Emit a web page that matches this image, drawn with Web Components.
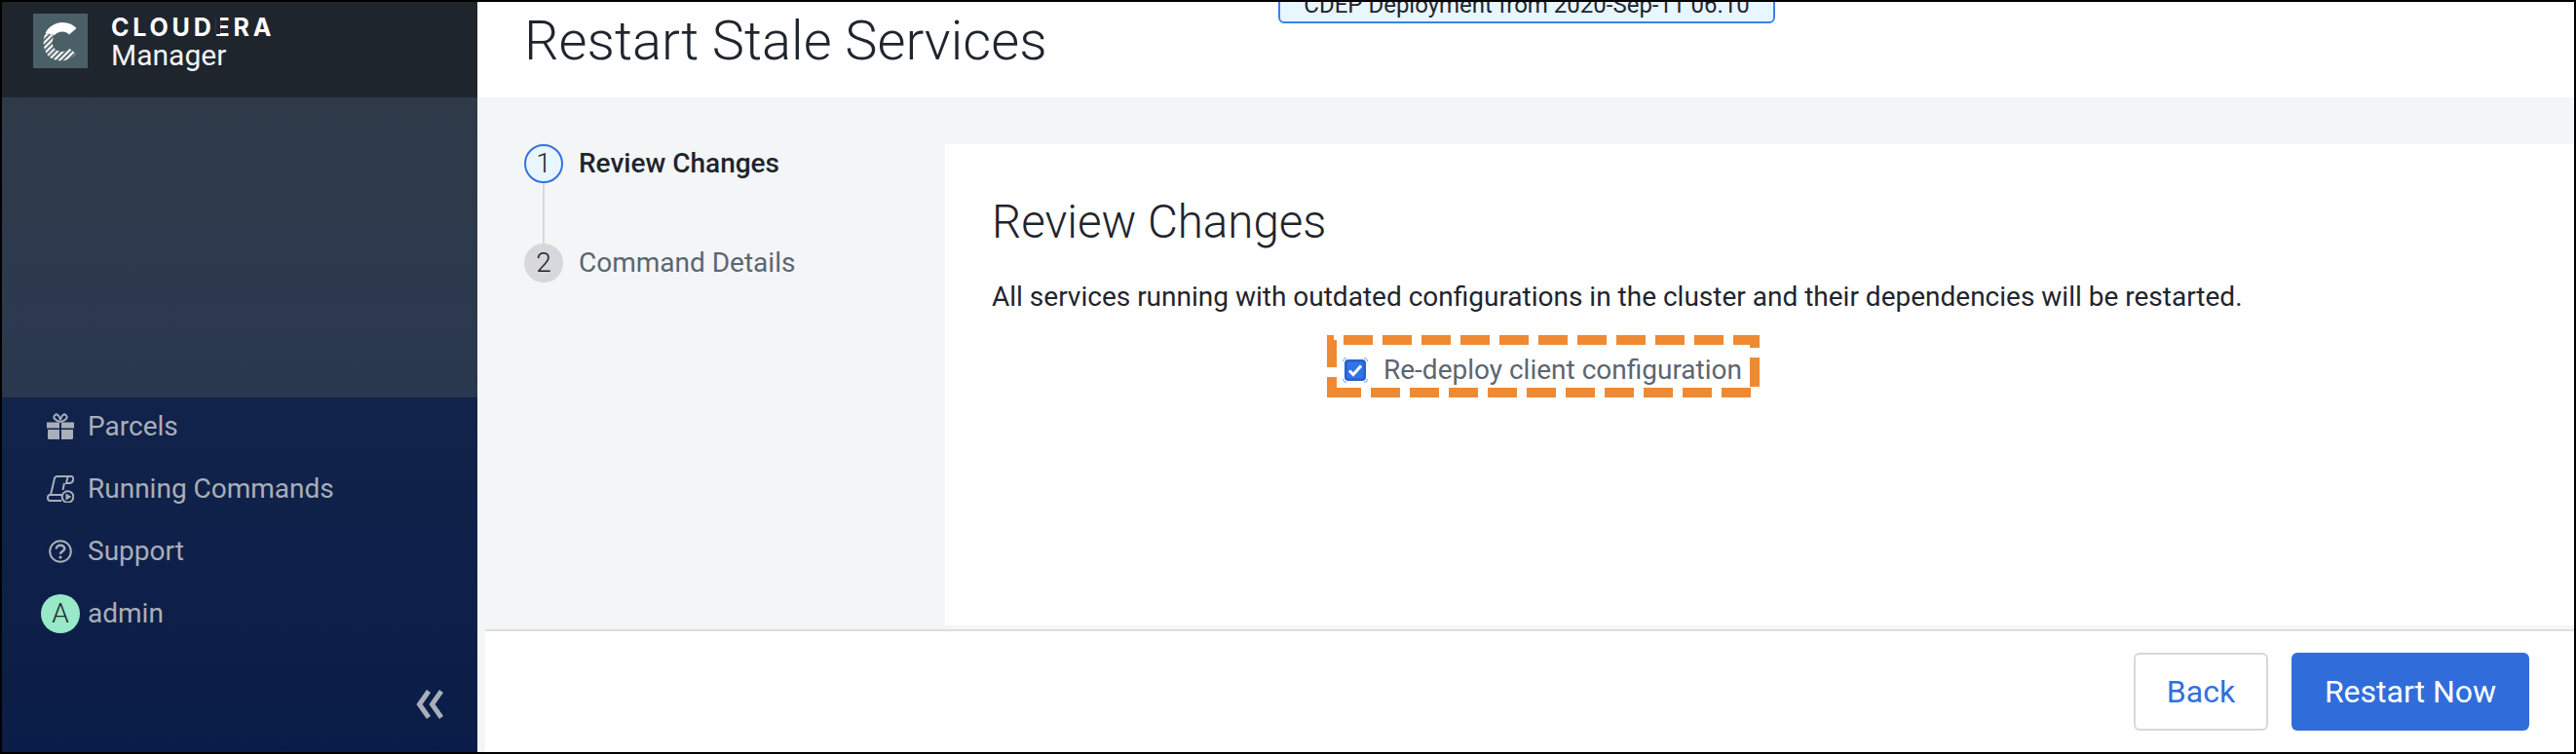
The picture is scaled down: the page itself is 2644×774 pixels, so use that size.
<!DOCTYPE html>
<html>
<head>
<meta charset="utf-8">
<style>
  html, body { margin: 0; height: 100%; background: #000; }
  body { font-family: Roboto, "Liberation Sans", sans-serif; overflow: hidden; }
  cm-app { width: 2644px; height: 774px; }
</style>
</head>
<body>
<cm-app>
  <cm-sidebar slot="side">
    <cm-nav-item label="Parcels" icon="gift"></cm-nav-item>
    <cm-nav-item label="Running Commands" icon="scroll"></cm-nav-item>
    <cm-nav-item label="Support" icon="help"></cm-nav-item>
    <cm-nav-item label="admin" icon="avatar"></cm-nav-item>
  </cm-sidebar>
  <cm-page-head slot="head" heading="Restart Stale Services" banner="CDEP Deployment from 2020-Sep-11 06.10"></cm-page-head>
  <cm-stepper slot="steps">
    <cm-step num="1" label="Review Changes" active></cm-step>
    <cm-step num="2" label="Command Details"></cm-step>
  </cm-stepper>
  <cm-review slot="panel"></cm-review>
  <cm-footer slot="foot"></cm-footer>
</cm-app>

<script>
class CmApp extends HTMLElement {
	constructor() {
		super();
		this.attachShadow({ mode: 'open' });
		this.shadowRoot.innerHTML = `
		<style>
			:host { display: block; box-sizing: border-box; padding: 2px; background: #000; }
			.frame { display: flex; height: 100%; background: #f4f5f7; }
			.main { flex: 1; display: flex; flex-direction: column; min-width: 0; }
			.body { flex: 1; display: flex; padding-top: 48px; min-height: 0; }
			.steps { width: 480px; flex: none; padding: 0 0 0 48px; box-sizing: border-box; }
			.panel { flex: 1; background: #fff; margin-bottom: 4px; }
		</style>
		<div class="frame">
			<slot name="side"></slot>
			<div class="main">
				<slot name="head"></slot>
				<div class="body">
					<div class="steps"><slot name="steps"></slot></div>
					<div class="panel"><slot name="panel"></slot></div>
				</div>
				<slot name="foot"></slot>
			</div>
		</div>`;
	}
}
customElements.define('cm-app', CmApp);

class CmSidebar extends HTMLElement {
	constructor() {
		super();
		this.attachShadow({ mode: 'open' });
		this.shadowRoot.innerHTML = `
		<style>
			:host { display: flex; flex-direction: column; width: 488px; flex: none; background: linear-gradient(180deg, #1a2a4c 0, #0a1d48 100%); }
			.brand { height: 98px; box-sizing: border-box; background: #1f252d; display: flex; padding: 12px 0 0 32px; gap: 24px; color: #fff; }
			.mark { width: 56px; height: 56px; background: #4b5f66; }
			.names { display: flex; flex-direction: column; }
			.co { font: 700 25px/24px Inter, sans-serif; letter-spacing: 3.8px; height: 24px; margin-top: 2px; }
			.co i { font-style: normal; position: relative; }
			.co i::before { content: ""; position: absolute; left: 1px; top: 2px; width: 4px; height: 20px; background: #1f252d; }
			.prod { font: 400 30px/34px Roboto, sans-serif; color: #f2f4f5; margin-top: 0; }
			.band { height: 308px; background: linear-gradient(180deg, #2f3a49 0, #2a384f 100%); }
			.nav { flex: 1; display: flex; flex-direction: column; }
			.items { display: flex; flex-direction: column; margin-top: -2px; }
			.foot { flex: 1; display: flex; justify-content: flex-end; align-items: flex-start; padding: 46px 35px 0 0; }
		</style>
		<div class="brand">
			<svg class="mark" viewBox="0 0 56 56">
				<defs>
					<pattern id="h" width="4" height="4" patternUnits="userSpaceOnUse" patternTransform="rotate(45)">
						<rect width="2.2" height="4" fill="#fff"/>
					</pattern>
				</defs>
				<path d="M12.500 20 C16 13 23 9 30 9 C36 9 41 11 44.500 15 L37 21.500 C35 19.500 33 18.500 30 18.500 C27 18.500 24 20 22 22 Z" fill="#fff"/>
				<path d="M12.500 20 L22 22 C19 27 19 32 22 36 L15 43 C10 36 9.500 27 12.500 20 Z" fill="url(#h)"/>
				<path d="M15 43 L22 36 C27 40 33 40 37 35.500 L44 41 C37 50 23 51 15 43 Z" fill="url(#h)"/>
			</svg>
			<div class="names">
				<div class="co">CLOUD<i>E</i>RA</div>
				<div class="prod">Manager</div>
			</div>
		</div>
		<div class="band"></div>
		<div class="nav">
			<div class="items"><slot></slot></div>
			<div class="foot">
				<svg width="28" height="30" viewBox="0 0 28 30" fill="none" stroke="#a9aeb9" stroke-width="5">
					<path d="M13 1.500 L3.500 15 L13 28.500"/>
					<path d="M26 1.500 L16.500 15 L26 28.500"/>
				</svg>
			</div>
		</div>`;
	}
}
customElements.define('cm-sidebar', CmSidebar);

const NAV_ICONS = {
	gift: `<svg width="28" height="28" viewBox="0 0 28 28"><path fill="#a9aeb9" d="M0 9.5h13v6H0zM15 9.5h13v6H15zM1 17h12v10H2.500a1.500 1.500 0 0 1-1.500-1.500zM15 17h12v8.500a1.500 1.500 0 0 1-1.500 1.500H15z"/><path fill="none" stroke="#a9aeb9" stroke-width="2" d="M14 9 C9 8 6 5 8 2.500 C10 0 13 2 14 7 C15 2 18 0 20 2.500 C22 5 19 8 14 9Z"/></svg>`,
	scroll: `<svg width="28" height="28" viewBox="0 0 28 28" fill="none" stroke="#a9aeb9" stroke-width="2"><path d="M4 20 L8 3 C8.500 1.500 9.500 1 11 1 H25 C27 1 27.500 3 27 5 C26.500 7 25 8 23 8 H20 L21.500 2"/><path d="M8 20 H3.500 C2 20 1 21 1 23 C1 25 2 26 3.500 26 H15"/><path d="M8 20 H17 M18 8 L16.500 15"/><circle cx="21.500" cy="22" r="5.800"/><path d="M19.500 18.500 L25.500 22 L19.500 25.500Z" fill="#a9aeb9" stroke="none"/></svg>`,
	help: `<svg width="28" height="28" viewBox="0 0 28 28" fill="none" stroke="#a9aeb9" stroke-width="2"><circle cx="14" cy="14" r="10.800"/><path stroke-width="2.600" d="M9.800 11.500 C9.800 9 11.800 7.800 14 7.800 C16.400 7.800 18.200 9.200 18.200 11.200 C18.200 14 14 14 14 16.800"/><circle cx="14" cy="20" r="1.600" fill="#a9aeb9" stroke="none"/></svg>`
};

class CmNavItem extends HTMLElement {
	constructor() {
		super();
		this.attachShadow({ mode: 'open' });
	}
	connectedCallback() {
		const icon = this.getAttribute('icon');
		const glyph = icon === 'avatar' ? '<span class="avatar">A</span>' : NAV_ICONS[icon];
		this.shadowRoot.innerHTML = `
		<style>
			:host { display: flex; align-items: center; height: 64px; padding-left: 46px; color: #a9aeb9; font: 400 28px/32px Roboto, sans-serif; }
			.icon { width: 28px; height: 40px; display: flex; align-items: center; justify-content: center; margin-right: 14px; flex: none; }
			.avatar { width: 40px; height: 40px; flex: none; border-radius: 50%; background: #97e9c8; color: #24292f; font: 300 28px/40px Roboto, sans-serif; text-align: center; }
		</style>
		<span class="icon">${glyph}</span><span>${this.getAttribute('label')}</span>`;
	}
}
customElements.define('cm-nav-item', CmNavItem);

class CmPageHead extends HTMLElement {
	constructor() {
		super();
		this.attachShadow({ mode: 'open' });
	}
	connectedCallback() {
		this.shadowRoot.innerHTML = `
		<style>
			:host { display: block; height: 98px; background: #fff; position: relative; overflow: hidden; color: #1f252d; }
			h1 { margin: 0; padding: 11px 0 0 48px; font: 300 56px/58px Roboto, sans-serif; }
			.banner { position: absolute; left: 822px; top: -10px; width: 510px; height: 32px; box-sizing: border-box; border: 2px solid #3b80ee; border-radius: 6px; background: #e8f6ff; font: 400 24px/22px Roboto, sans-serif; text-align: center; white-space: nowrap; }
		</style>
		<h1>${this.getAttribute('heading')}</h1>
		<div class="banner">${this.getAttribute('banner')}</div>`;
	}
}
customElements.define('cm-page-head', CmPageHead);

class CmStepper extends HTMLElement {
	constructor() {
		super();
		this.attachShadow({ mode: 'open' });
		this.shadowRoot.innerHTML = `
		<style>
			:host { display: flex; flex-direction: column; gap: 62px; }
		</style>
		<slot></slot>`;
	}
}
customElements.define('cm-stepper', CmStepper);

class CmStep extends HTMLElement {
	constructor() {
		super();
		this.attachShadow({ mode: 'open' });
	}
	connectedCallback() {
		const active = this.hasAttribute('active');
		this.shadowRoot.innerHTML = `
		<style>
			:host { display: flex; align-items: center; gap: 16px; height: 40px; position: relative; font: ${active ? 500 : 400} 28px/32px Roboto, sans-serif; color: ${active ? '#1f252d' : '#5b6670'}; }
			.dot { width: 40px; height: 40px; box-sizing: border-box; border-radius: 50%; flex: none; text-align: center; color: #1f252d; font: 300 28px/36px Roboto, sans-serif; background: ${active ? '#e8f6ff' : '#d6d8db'}; border: 2px solid ${active ? '#3273e0' : '#d6d8db'}; }
			${active ? '.line { position: absolute; left: 19px; top: 40px; width: 2px; height: 62px; background: #d6d8db; }' : ''}
		</style>
		<span class="dot">${this.getAttribute('num')}</span>
		<span>${this.getAttribute('label')}</span>
		${active ? '<span class="line"></span>' : ''}`;
	}
}
customElements.define('cm-step', CmStep);

class CmDashBox extends HTMLElement {
	constructor() {
		super();
		this.attachShadow({ mode: 'open' });
		this.shadowRoot.innerHTML = `
		<style>
			:host { display: inline-block; position: relative; box-sizing: border-box; width: 444px; height: 64px; }
			svg { position: absolute; left: 0; top: 0; }
			.inner { display: flex; align-items: center; height: 100%; padding: 7px 0 0 16px; box-sizing: border-box; }
		</style>
		<div class="inner"><slot></slot></div>
		<svg width="444" height="64" fill="#ef8a33">
			<path id="d"></path>
		</svg>`;
		// corners are uneven in the original, so the pieces are listed by hand
		let d = 'M0 0h7v5h3v28h-10z M0 43h10v11h-5v10h-5z';
		for (let x = 17; x < 400; x += 40) d += `M${x} 0h30v10h-30z`;
		for (let x = 5; x <= 405; x += 40) d += `M${x} 54h30v10h-30z`;
		d += 'M417 0h27v13h-10v-3h-17z M434 23h10v30h-10z';
		this.shadowRoot.getElementById('d').setAttribute('d', d);
	}
}
customElements.define('cm-dash-box', CmDashBox);

class CmReview extends HTMLElement {
	constructor() {
		super();
		this.attachShadow({ mode: 'open' });
		this.shadowRoot.innerHTML = `
		<style>
			:host { display: block; padding: 52px 0 0 48px; color: #1f252d; }
			h2 { margin: 0 0 31px; font: 300 47.5px/56px Roboto, sans-serif; }
			p { margin: 0; font: 400 28px/36px Roboto, sans-serif; }
			.row { margin: 21px 0 0 344px; display: block; height: 64px; }
			.check { display: flex; align-items: center; gap: 16px; color: #5b6670; font: 400 28px/32px Roboto, sans-serif; }
			.box { width: 26px; height: 26px; flex: none; }
		</style>
		<h2>Review Changes</h2>
		<p>All services running with outdated configurations in the cluster and their dependencies will be restarted.</p>
		<div class="row">
			<cm-dash-box>
				<div class="check">
					<svg class="box" viewBox="0 0 26 26">
						<path d="M.5 4 A3.500 3.500 0 0 1 4 .5 M22 .5 A3.500 3.500 0 0 1 25.500 4 M25.500 22 A3.500 3.500 0 0 1 22 25.500 M4 25.500 A3.500 3.500 0 0 1 .5 22" fill="none" stroke="#6a9ef0" stroke-width="1"/>
						<rect x="2" y="2" width="22" height="22" rx="4" fill="#2b5fc8"/>
						<rect x="4.500" y="4.500" width="17" height="17" rx="2" fill="#3273e8"/>
						<path d="M7 13.500 L11 17.500 L19 8.500" fill="none" stroke="#fff" stroke-width="3"/>
					</svg>
					<span>Re-deploy client configuration</span>
				</div>
			</cm-dash-box>
		</div>`;
	}
}
customElements.define('cm-review', CmReview);

class CmFooter extends HTMLElement {
	constructor() {
		super();
		this.attachShadow({ mode: 'open' });
		this.shadowRoot.innerHTML = `
		<style>
			:host { display: flex; justify-content: flex-end; align-items: flex-start; gap: 24px; height: 126px; box-sizing: border-box; margin-left: 8px; background: #fff; border-top: 2px solid #dcdde1; padding: 22px 46px 0 0; }
			button { height: 80px; box-sizing: border-box; border-radius: 6px; font: 400 32px/36px Roboto, sans-serif; cursor: pointer; }
			.back { width: 138px; background: #fff; color: #3170dc; border: 2px solid #d6d8db; }
			.go { width: 244px; background: #306ddb; color: #fff; border: 0; }
		</style>
		<button class="back">Back</button>
		<button class="go">Restart Now</button>`;
	}
}
customElements.define('cm-footer', CmFooter);
</script>
</body>
</html>
